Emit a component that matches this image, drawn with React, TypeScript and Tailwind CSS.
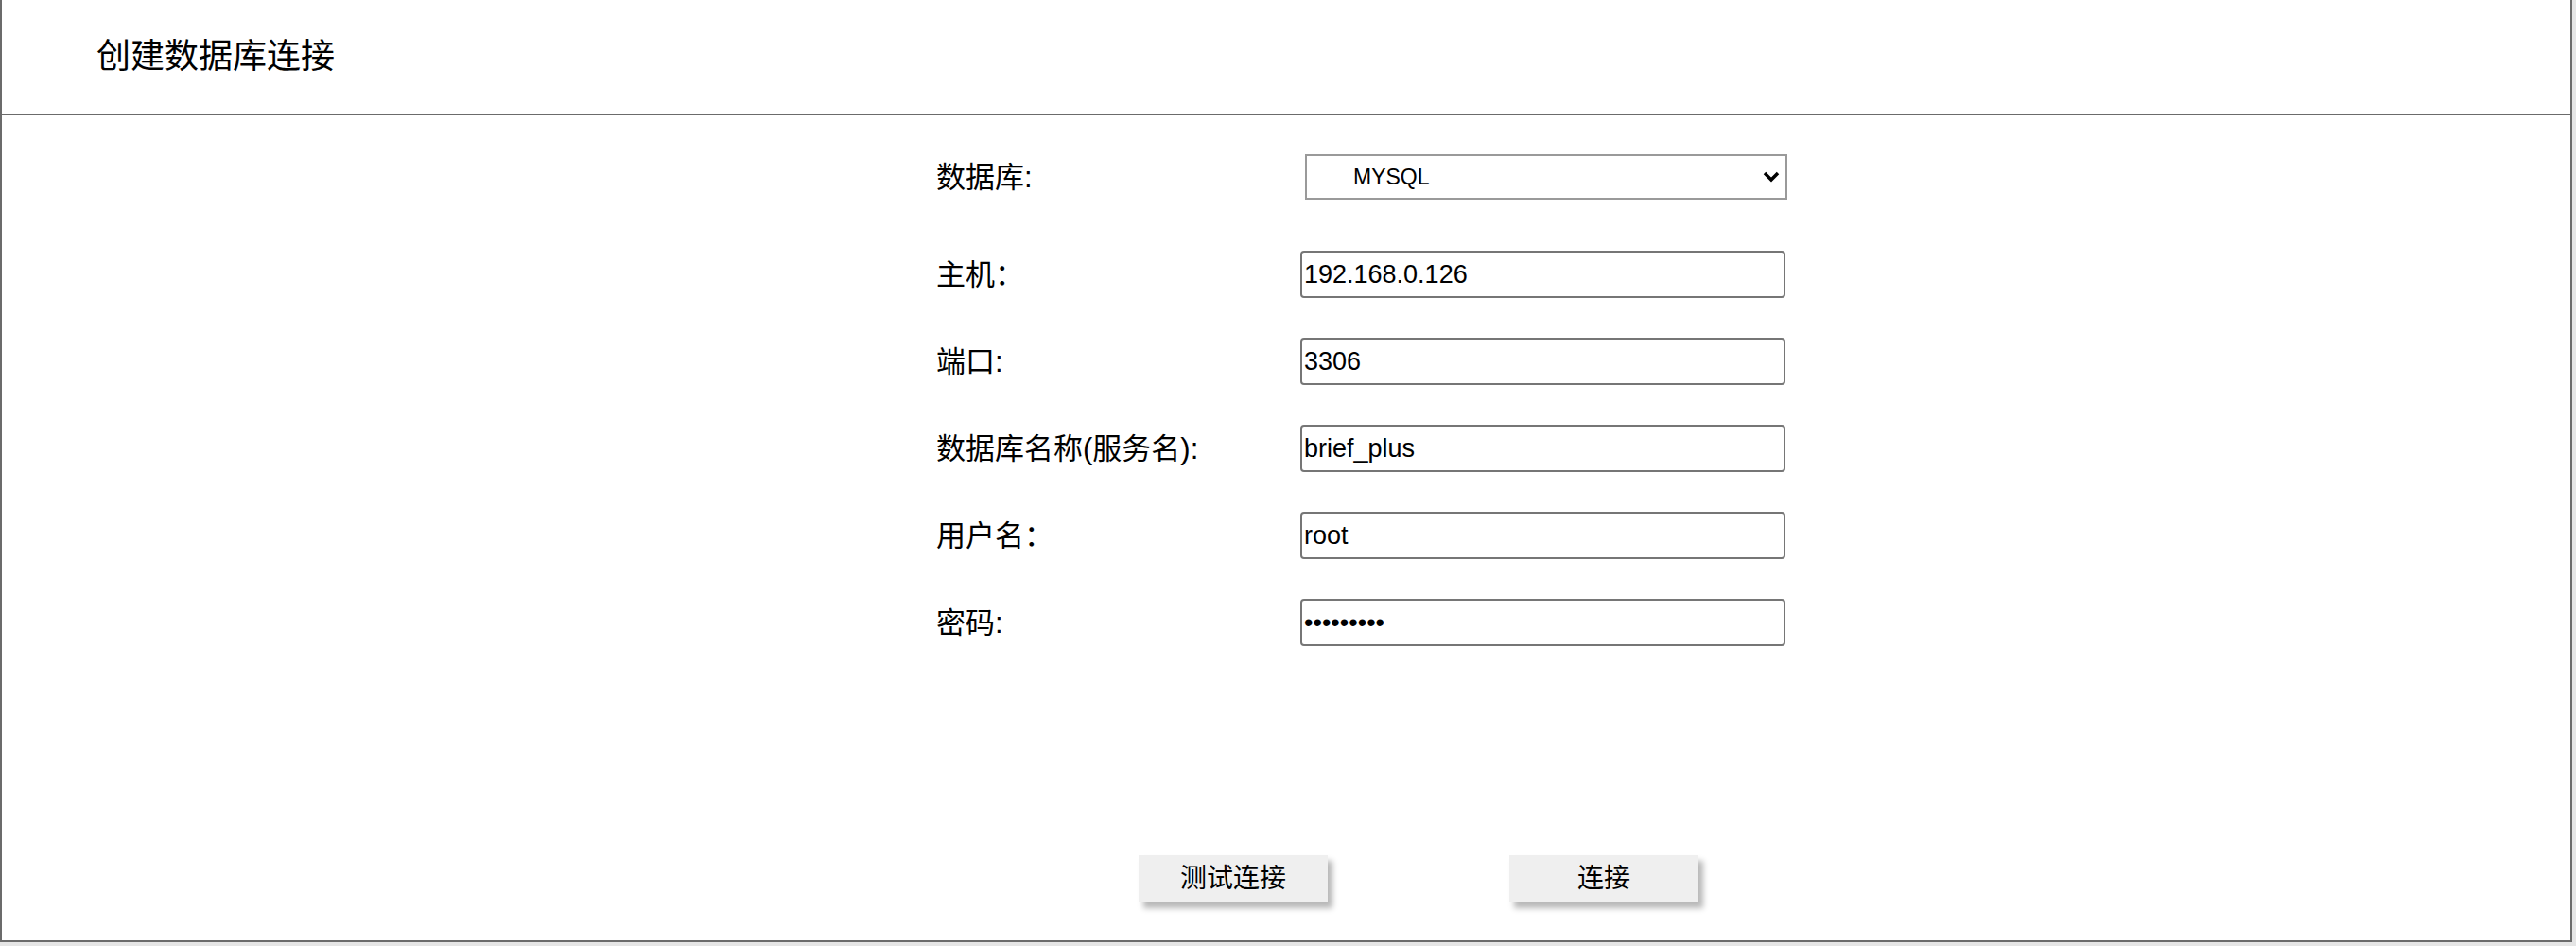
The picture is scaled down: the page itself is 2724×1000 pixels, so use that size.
import React from "react";

const font = { fontFamily: '"Liberation Sans", "Noto Sans CJK SC", sans-serif' };

function Row({ label, children, className = "" }: { label: string; children: React.ReactNode; className?: string }) {
  return (
    <div className={"flex items-center " + className}>
      <div className="w-[385px] shrink-0 text-[31px] leading-none text-black">{label}</div>
      {children}
    </div>
  );
}

function TextInput({ value }: { value: string }) {
  return (
    <input
      type="text"
      readOnly
      value={value}
      className="box-border h-[50px] w-[513px] rounded-[4px] border-2 border-[#767676] bg-white px-[2px] text-[27px] leading-[30px] text-black outline-none"
      style={font}
    />
  );
}

export default function App() {
  return (
    <div className="h-[1000px] w-full bg-[#e5e5e5]" style={font}>
      <div className="box-border flex h-[996px] w-[2720px] flex-col border-b-2 border-l-2 border-r-2 border-[#6b6b6b] bg-white">
        <div className="box-border flex h-[122px] shrink-0 items-center border-b-2 border-[#6b6b6b] pl-[100px]">
          <span className="text-[36px] leading-none text-black">创建数据库连接</span>
        </div>

        <div className="flex flex-col pl-[988px] pt-[41px]">
          <Row label="数据库:" className="mb-[54px]">
            <div className="relative ml-[5px] h-[48px] w-[510px]">
              <select
                className="box-border h-[48px] w-[510px] appearance-none border-2 border-[#9a9a9a] bg-white pl-[49px] text-[23px] text-black outline-none"
                style={font}
                defaultValue="MYSQL"
              >
                <option value="MYSQL">MYSQL</option>
                <option value="ORACLE">ORACLE</option>
              </select>
              <svg
                className="pointer-events-none absolute right-[7px] top-[17px]"
                width="20"
                height="13"
                viewBox="0 0 20 13"
              >
                <polyline points="3,3 10,10 17,3" fill="none" stroke="#000" strokeWidth="3.5" />
              </svg>
            </div>
          </Row>
          <div className="flex flex-col gap-[42px]">
            <Row label="主机：">
              <TextInput value="192.168.0.126" />
            </Row>
            <Row label="端口:">
              <TextInput value="3306" />
            </Row>
            <Row label="数据库名称(服务名):">
              <TextInput value="brief_plus" />
            </Row>
            <Row label="用户名：">
              <TextInput value="root" />
            </Row>
            <Row label="密码:">
              <TextInput value="•••••••••" />
            </Row>
          </div>
        </div>

        <div className="mt-[221px] flex gap-[192px] pl-[1202px]">
          <button className="h-[50px] w-[200px] bg-[#efefef] text-[28px] leading-none text-black shadow-[5px_6px_6px_#b8b8b8]" style={font}>
            测试连接
          </button>
          <button className="h-[50px] w-[200px] bg-[#efefef] text-[28px] leading-none text-black shadow-[5px_6px_6px_#b8b8b8]" style={font}>
            连接
          </button>
        </div>
      </div>
    </div>
  );
}
